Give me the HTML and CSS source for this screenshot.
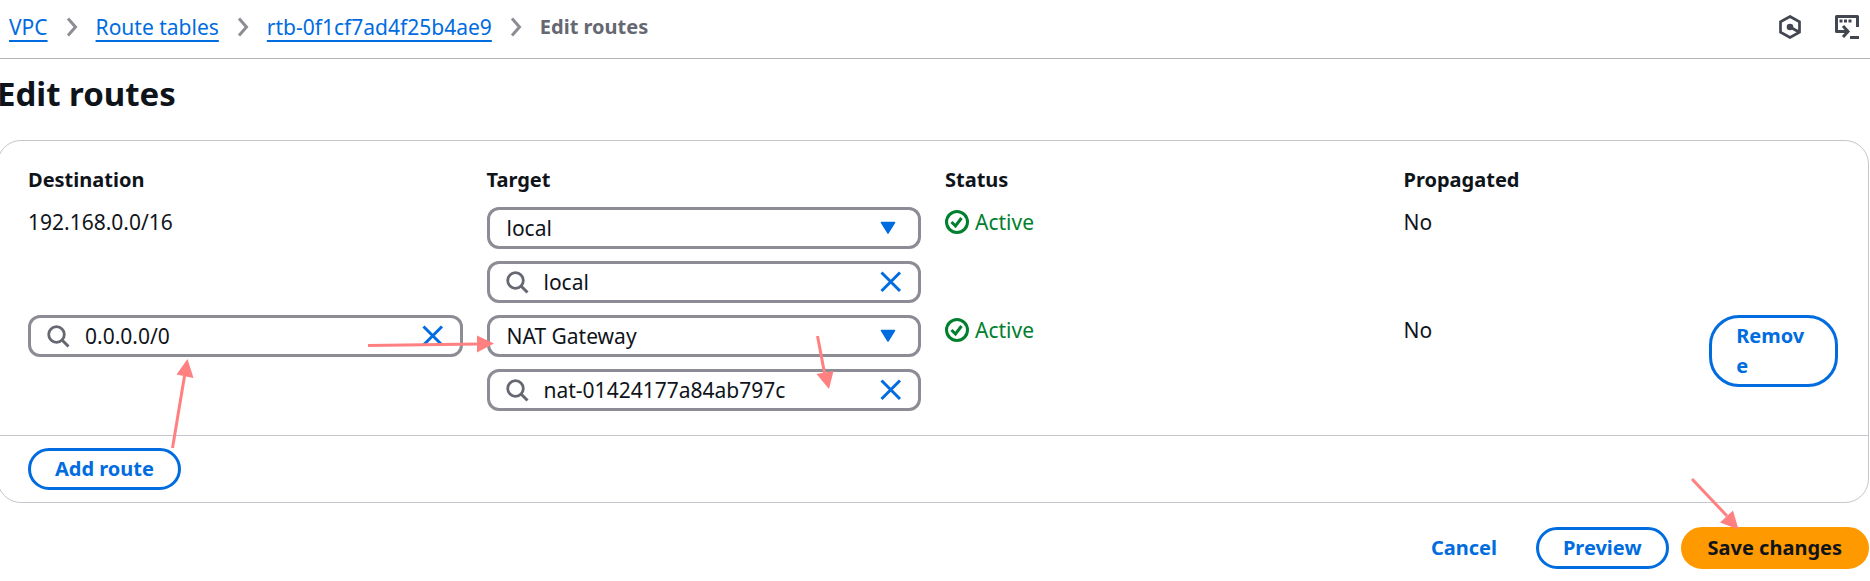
FILE: index.html
```
<!DOCTYPE html>
<html lang="en">
<head>
<meta charset="utf-8">
<meta name="viewport" content="width=device-width, initial-scale=1">
<title>Edit routes</title>
<link rel="stylesheet" href="styles.css">
</head>
<body>
<svg class="symbols" aria-hidden="true">
  <symbol id="chevron" viewBox="0 0 12 20"><path d="M2 1.5 9.5 10 2 18.500" fill="none" stroke="currentColor" stroke-width="3"/></symbol>
  <symbol id="search" viewBox="0 0 24 24"><circle cx="10.500" cy="10.500" r="7.800" fill="none" stroke="currentColor" stroke-width="2.800"/><path d="m16 16 6.500 6.500" stroke="currentColor" stroke-width="3"/></symbol>
  <symbol id="close" viewBox="0 0 24 24"><path d="m2.500 2.500 18.500 18.500M21 2.500 2.500 21" stroke="currentColor" stroke-width="3"/></symbol>
  <symbol id="caret" viewBox="0 0 16 14"><path d="M1.500 1.500h13L8 12z" fill="currentColor" stroke="currentColor" stroke-width="1.500" stroke-linejoin="round"/></symbol>
  <symbol id="success" viewBox="0 0 24 24"><circle cx="12" cy="12" r="10.500" fill="none" stroke="currentColor" stroke-width="3"/><path d="m6.500 12 4 4 6-8" fill="none" stroke="currentColor" stroke-width="3"/></symbol>
</svg>

<header class="topbar">
  <nav aria-label="Breadcrumbs">
    <ol class="crumbs">
      <li><a href="#vpc">VPC</a><svg class="chevron" aria-hidden="true"><use href="#chevron"/></svg></li>
      <li><a href="#tables">Route tables</a><svg class="chevron" aria-hidden="true"><use href="#chevron"/></svg></li>
      <li><a href="#table">rtb-0f1cf7ad4f25b4ae9</a><svg class="chevron" aria-hidden="true"><use href="#chevron"/></svg></li>
      <li class="current" aria-current="page">Edit routes</li>
    </ol>
  </nav>
  <div class="tools">
    <button class="icon-button" type="button" aria-label="Amazon Q">
      <svg viewBox="0 0 24 24" width="24" height="24"><path d="m12 1.500 9.500 5.200v10.600L12 22.500l-9.500-5.200V6.700z" fill="none" stroke="currentColor" stroke-width="2.700"/><circle cx="12" cy="12" r="3.300" fill="currentColor"/><path d="m12 12 9 5" stroke="currentColor" stroke-width="2.700"/></svg>
    </button>
    <button class="icon-button" type="button" aria-label="CloudShell">
      <svg viewBox="0 0 24 24" width="24" height="24"><path d="M22.500 12V1.500h-21v15H13" fill="none" stroke="currentColor" stroke-width="3" stroke-linejoin="round"/><path d="m8 11 5 5.500L8 22" fill="none" stroke="currentColor" stroke-width="3"/><path d="M4.500 4.500h3v3h-3zM9 4.500h3v3H9zM13.500 4.500h3v3h-3zM15 21h9v3h-9z" fill="currentColor"/></svg>
    </button>
  </div>
</header>

<main class="page">
  <h1>Edit routes</h1>
  <form>
    <section class="card">
      <table class="routes">
        <thead>
          <tr><th>Destination</th><th>Target</th><th>Status</th><th>Propagated</th></tr>
        </thead>
        <tbody>
          <tr>
            <td>192.168.0.0/16</td>
            <td class="stack">
              <div class="field">
                <select aria-label="Target type"><option>local</option></select>
                <svg class="caret" aria-hidden="true"><use href="#caret"/></svg>
              </div>
              <div class="field">
                <svg class="search" aria-hidden="true"><use href="#search"/></svg>
                <input type="text" aria-label="Target" value="local">
                <button class="clear" type="button" aria-label="Clear target"><svg><use href="#close"/></svg></button>
              </div>
            </td>
            <td><span class="status"><svg aria-hidden="true"><use href="#success"/></svg>Active</span></td>
            <td>No</td>
          </tr>
          <tr>
            <td>
              <div class="field">
                <svg class="search" aria-hidden="true"><use href="#search"/></svg>
                <input type="text" aria-label="Destination" value="0.0.0.0/0">
                <button class="clear" type="button" aria-label="Clear destination"><svg><use href="#close"/></svg></button>
              </div>
            </td>
            <td class="stack">
              <div class="field">
                <select aria-label="Target type"><option>NAT Gateway</option></select>
                <svg class="caret" aria-hidden="true"><use href="#caret"/></svg>
              </div>
              <div class="field">
                <svg class="search" aria-hidden="true"><use href="#search"/></svg>
                <input type="text" aria-label="Target" value="nat-01424177a84ab797c">
                <button class="clear" type="button" aria-label="Clear target"><svg><use href="#close"/></svg></button>
              </div>
            </td>
            <td><span class="status"><svg aria-hidden="true"><use href="#success"/></svg>Active</span></td>
            <td>No</td>
            <td><button class="button remove" type="button">Remove</button></td>
          </tr>
        </tbody>
      </table>
      <div class="card-footer"><button class="button" type="button">Add route</button></div>
    </section>
    <div class="actions">
      <button class="button link" type="button">Cancel</button>
      <button class="button" type="button">Preview</button>
      <button class="button primary" type="submit">Save changes</button>
    </div>
  </form>
</main>

<svg class="arrows" viewBox="0 0 1870 581" width="1870" height="581" aria-hidden="true">
  <g stroke-width="3"><path d="m172.500 448 12-72"/><path d="m368 345.500 110-1.500"/><path d="m817.500 336 7 37"/><path d="m1692 479 35 37"/></g>
  <g stroke="none"><path d="m187.500 359 6 19-17-3.500z"/><path d="m494 343.500-17 9v-17z"/><path d="m829 389-12.500-15 17-3z"/><path d="m1738.500 529.500-18.500-7 13-12z"/></g>
</svg>
</body>
</html>
```
FILE: styles.css
```
* { box-sizing: border-box; }

body {
  margin: 0;
  position: relative;
  background: #fff;
  color: #0f141a;
  font-family: "Noto Sans", "Open Sans", sans-serif;
  font-size: 21px;
  line-height: 30px;
}

.symbols { display: none; }

button, input, select { font: inherit; color: inherit; margin: 0; }
button { cursor: pointer; }
svg { display: block; flex: none; }

.topbar {
  display: flex;
  justify-content: space-between;
  align-items: center;
  padding: 12px 11px 16px 9px;
  border-bottom: 1px solid #b4b4bb;
}

.crumbs {
  display: flex;
  gap: 18px;
  margin: 0;
  padding: 0;
  list-style: none;
}
.crumbs li { display: flex; align-items: center; gap: 18px; }
.crumbs a {
  color: #006ce0;
  text-decoration: underline;
  text-decoration-thickness: 2px;
  text-underline-offset: 5px;
}
.crumbs .current { color: #656871; font-size: 20px; font-weight: 700; }
.chevron { width: 12px; height: 20px; color: #8c8c94; }

.tools { display: flex; gap: 33px; color: #424650; }
.icon-button { padding: 0; border: 0; background: none; }

.page { margin: 0 1px 0 -3px; }

h1 {
  margin: 0;
  padding: 12px 0 24px;
  font-size: 33px;
  line-height: 45px;
}

.card { border: 1px solid #c6c6cd; border-radius: 24px; }

.routes, .routes thead, .routes tbody { display: block; }
.routes { padding: 24px 30px; }
.routes tr {
  display: grid;
  grid-template-columns: repeat(12, minmax(0, 1fr));
  column-gap: 24px;
  margin-top: 12px;
}
.routes thead tr { margin-top: 0; }
.routes th, .routes td { grid-column: span 3; padding: 0; text-align: left; }
.routes th { font-size: 20px; }
.routes th:nth-child(4), .routes td:nth-child(4) { grid-column: span 2; }
.routes td:nth-child(5) { grid-column: span 1; }
.routes .stack { display: grid; gap: 12px; }

.field {
  display: flex;
  align-items: center;
  height: 42px;
  border: 3px solid #8c8c94;
  border-radius: 12px;
  padding: 0 15px;
}
.field input, .field select {
  flex: 1;
  min-width: 0;
  padding: 0;
  border: 0;
  outline: 0;
  background: none;
  appearance: none;
}
.field select { padding-left: 2px; }
.search { width: 24px; height: 24px; margin-right: 15px; color: #656871; }
.caret { width: 16px; height: 14px; margin-right: 7px; color: #006ce0; pointer-events: none; }
.clear { padding: 0; border: 0; background: none; color: #006ce0; }
.clear svg { width: 24px; height: 24px; }

.status { display: flex; align-items: center; gap: 6px; color: #00802f; }
.status svg { width: 24px; height: 24px; }

.button {
  padding: 3px 24px;
  border: 3px solid #006ce0;
  border-radius: 30px;
  background: #fff;
  color: #006ce0;
  font-size: 20px;
  font-weight: 700;
}
.remove { width: 100%; text-align: left; overflow-wrap: anywhere; }
.link { border-color: transparent; }
.primary { border-color: #ff9900; background: #ff9900; color: #0f141a; }

.card-footer { padding: 12px 30px; border-top: 1px solid #c6c6cd; }

.actions {
  display: flex;
  justify-content: flex-end;
  gap: 12px;
  padding: 24px 0 12px;
}

.arrows {
  position: absolute;
  top: 0;
  left: 0;
  fill: #ff8080;
  stroke: #ff8080;
  pointer-events: none;
}
```
